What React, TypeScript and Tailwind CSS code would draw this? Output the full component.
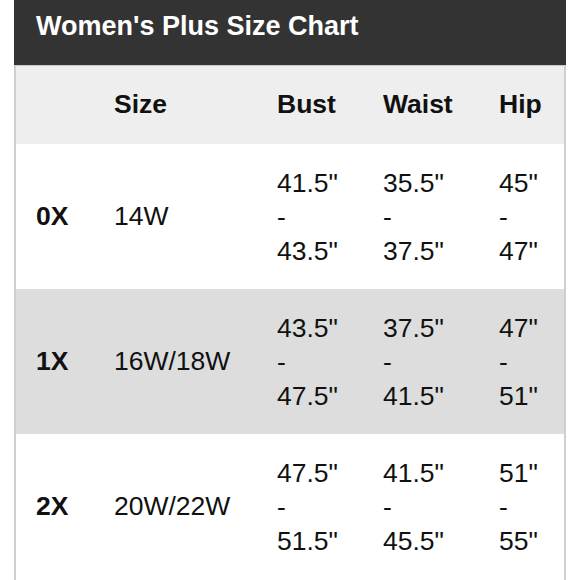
const rows = [
  { code: '0X', size: '14W', bust: ['41.5"', '43.5"'], waist: ['35.5"', '37.5"'], hip: ['45"', '47"'] },
  { code: '1X', size: '16W/18W', bust: ['43.5"', '47.5"'], waist: ['37.5"', '41.5"'], hip: ['47"', '51"'] },
  { code: '2X', size: '20W/22W', bust: ['47.5"', '51.5"'], waist: ['41.5"', '45.5"'], hip: ['51"', '55"'] },
];

const cols = 'grid grid-cols-[78px_163px_106px_116px_1fr]';

function Range({ v }: { v: string[] }) {
  return (
    <div className="pl-5 flex flex-col leading-[34px]">
      <span>{v[0]}</span>
      <span>-</span>
      <span>{v[1]}</span>
    </div>
  );
}

export default function App() {
  return (
    <div
      className="w-[580px] h-[580px] overflow-hidden bg-white text-[#111] text-[26.5px]"
      style={{ fontFamily: '"Liberation Sans", Arial, sans-serif' }}
    >
      <div className="ml-[14px] w-[552px] border-x-2 border-[#cfcfcf] min-h-[580px]">
        {/* Title bar */}
        <div className="h-[65px] bg-[#333333] pt-[8px] -mx-[2px] pl-[22px]">
          <h1 className="text-white font-bold text-[27px] leading-[36px]">Women's Plus Size Chart</h1>
        </div>
        <div className="h-px bg-[#c8c8c8]" />

        {/* Column headings */}
        <div className={`${cols} h-[78px] items-center bg-[#eeeeee] font-bold`}>
          <div />
          <div className="pl-5">Size</div>
          <div className="pl-5">Bust</div>
          <div className="pl-5">Waist</div>
          <div className="pl-5">Hip</div>
        </div>

        {rows.map((r, i) => (
          <div
            key={r.code}
            className={`${cols} h-[145px] items-center ${i % 2 === 1 ? 'bg-[#dddddd]' : 'bg-white'}`}
          >
            <div className="pl-5 font-bold">{r.code}</div>
            <div className="pl-5">{r.size}</div>
            <Range v={r.bust} />
            <Range v={r.waist} />
            <Range v={r.hip} />
          </div>
        ))}
      </div>
    </div>
  );
}
